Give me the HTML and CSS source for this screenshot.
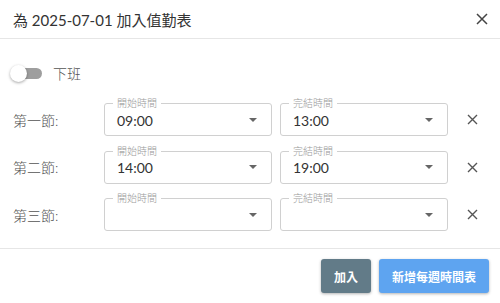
FILE: index.html
```html
<!DOCTYPE html>
<html lang="zh-Hant">
<head>
  <meta charset="UTF-8">
  <title>加入值勤表</title>
  <link rel="stylesheet" href="styles.css">
</head>
<body>
  <div class="dialog">
    <div class="dialog-header">
      <h1>為 2025-07-01 加入值勤表</h1>
      <span class="close-btn">
        <svg width="12" height="12" viewBox="0 0 12 12"><path d="M1 1L11 11M11 1L1 11" stroke="#444" stroke-width="1.5" fill="none"/></svg>
      </span>
    </div>
    <div class="dialog-body">
      <div class="toggle-row">
        <span class="switch"><span class="track"></span><span class="thumb"></span></span>
        <span class="toggle-label">下班</span>
      </div>

      <div class="slot-row">
        <span class="slot-label">第一節:</span>
        <div class="field">
          <span class="legend">開始時間</span>
          <span class="value">09:00</span>
          <span class="arrow"></span>
        </div>
        <div class="field">
          <span class="legend">完結時間</span>
          <span class="value">13:00</span>
          <span class="arrow"></span>
        </div>
        <span class="remove-btn">
          <svg width="11" height="11" viewBox="0 0 11 11"><path d="M1 1L10 10M10 1L1 10" stroke="#555" stroke-width="1.4" fill="none"/></svg>
        </span>
      </div>

      <div class="slot-row">
        <span class="slot-label">第二節:</span>
        <div class="field">
          <span class="legend">開始時間</span>
          <span class="value">14:00</span>
          <span class="arrow"></span>
        </div>
        <div class="field">
          <span class="legend">完結時間</span>
          <span class="value">19:00</span>
          <span class="arrow"></span>
        </div>
        <span class="remove-btn">
          <svg width="11" height="11" viewBox="0 0 11 11"><path d="M1 1L10 10M10 1L1 10" stroke="#555" stroke-width="1.4" fill="none"/></svg>
        </span>
      </div>

      <div class="slot-row">
        <span class="slot-label">第三節:</span>
        <div class="field">
          <span class="legend">開始時間</span>
          <span class="value"></span>
          <span class="arrow"></span>
        </div>
        <div class="field">
          <span class="legend">完結時間</span>
          <span class="value"></span>
          <span class="arrow"></span>
        </div>
        <span class="remove-btn">
          <svg width="11" height="11" viewBox="0 0 11 11"><path d="M1 1L10 10M10 1L1 10" stroke="#555" stroke-width="1.4" fill="none"/></svg>
        </span>
      </div>
    </div>
    <div class="dialog-footer">
      <button type="button" class="btn add-btn">加入</button>
      <button type="button" class="btn weekly-btn">新增每週時間表</button>
    </div>
  </div>
</body>
</html>
```

FILE: styles.css
```css
body {
  margin: 0;
  padding: 0;
  font-family: Lato, "Noto Sans CJK TC", sans-serif;
  background-color: #FFFFFF;
  color: #333333;
}
.dialog {
  width: 500px;
  height: 303px;
  overflow: hidden;
}
.dialog-header {
  height: 38px;
  border-bottom: 1px solid #E6E6E6;
  display: flex;
  align-items: center;
  justify-content: space-between;
  padding: 0 12px 0 13px;
}
h1 {
  margin: 0;
  font-size: 15px;
  font-weight: 400;
  color: #333333;
  line-height: 20px;
  padding-top: 1px;
}
.close-btn {
  display: flex;
  width: 12px;
  height: 12px;
}
.dialog-body {
  padding: 0 13px 17px;
}
.toggle-row {
  display: flex;
  align-items: center;
  height: 20px;
  margin-top: 24px;
}
.switch {
  position: relative;
  width: 32px;
  height: 17px;
  margin-left: -3px;
}
.switch .track {
  position: absolute;
  left: 4px;
  right: 0;
  top: 3px;
  height: 11px;
  border-radius: 6px;
  background-color: #9E9E9E;
}
.switch .thumb {
  position: absolute;
  left: 0;
  top: 0;
  width: 17px;
  height: 17px;
  border-radius: 50%;
  background-color: #FFFFFF;
  box-shadow: 0 1px 3px rgba(0,0,0,0.35);
}
.toggle-label {
  margin-left: 11px;
  font-size: 14px;
  font-weight: 300;
  color: #555555;
}
.slot-row {
  display: flex;
  align-items: center;
  height: 33px;
  margin-top: 14.5px;
}
.toggle-row + .slot-row {
  margin-top: 20px;
}
.slot-label {
  width: 91px;
  font-size: 14px;
  font-weight: 300;
  color: #555555;
}
.field {
  position: relative;
  width: 168px;
  height: 33px;
  box-sizing: border-box;
  border: 1px solid #D0D0D0;
  border-radius: 3px;
  display: flex;
  align-items: center;
  padding: 0 12px;
}
.field + .field {
  margin-left: 8px;
}
.field .legend {
  position: absolute;
  left: 8px;
  top: -7px;
  padding: 0 4px;
  background-color: #FFFFFF;
  font-size: 10px;
  line-height: 12px;
  font-weight: 300;
  color: #9A9A9A;
}
.field .value {
  flex: 1;
  font-size: 14px;
  color: #333333;
  padding-top: 1px;
}
.field .arrow {
  width: 0;
  height: 0;
  border-left: 4px solid transparent;
  border-right: 4px solid transparent;
  border-top: 4px solid #666666;
  margin-right: 2px;
}
.remove-btn {
  display: flex;
  margin-left: 19px;
  width: 11px;
  height: 11px;
}
.dialog-footer {
  border-top: 1px solid #E6E6E6;
  display: flex;
  justify-content: flex-end;
  gap: 8px;
  padding: 10px 11px 0;
}
.btn {
  height: 34px;
  padding: 0 13px;
  border: none;
  border-radius: 3px;
  font-family: Lato, "Noto Sans CJK TC", sans-serif;
  font-size: 12px;
  font-weight: 700;
  color: #FFFFFF;
  box-shadow: 0 1px 3px rgba(0,0,0,0.3);
  cursor: pointer;
}
.add-btn {
  background-color: #627B88;
}
.weekly-btn {
  background-color: #5EA4F0;
}
```
